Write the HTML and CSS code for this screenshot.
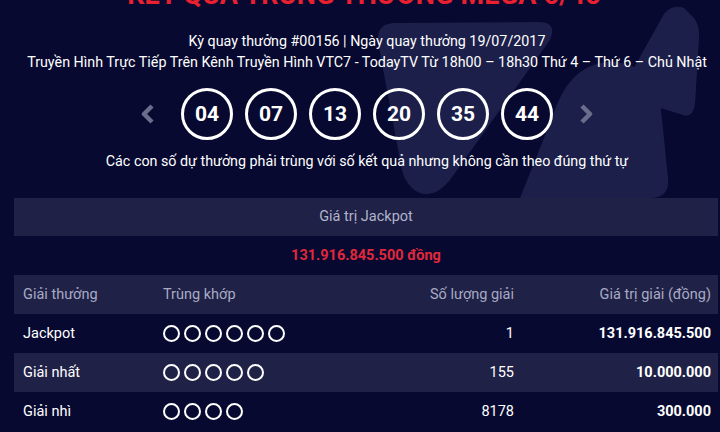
FILE: index.html
```html
<!DOCTYPE html>
<html lang="vi">
<head>
<meta charset="utf-8">
<title>Kết quả Mega 6/45</title>
<link rel="stylesheet" href="styles.css">
</head>
<body>
<div class="page">
  <svg class="deco" width="720" height="200" viewBox="0 0 720 200" aria-hidden="true">
    <path class="shape" d="M378,42 Q376,24 394,23 L538,22 Q558,22 550,40 L450,180 Q432,202 414,190 Q402,180 400,160 Z"/>
    <path class="shape" d="M520,198 L552,118 Q568,66 606,62 Q648,60 660,100 L668,178 Q670,198 650,198 Z"/>
    <path class="shape" d="M628,98 Q620,92 626,82 L664,14 Q672,4 684,8 L694,18 Q700,26 699,38 L695,104 Q693,120 680,114 Z"/>
  </svg>
  <div class="hero">
    <h1 class="title">KẾT QUẢ TRÚNG THƯỞNG MEGA 6/45</h1>
    <p class="meta">Kỳ quay thưởng #00156 | Ngày quay thưởng 19/07/2017</p>
    <p class="meta">Truyền Hình Trực Tiếp Trên Kênh Truyền Hình VTC7 - TodayTV Từ 18h00 – 18h30 Thứ 4 – Thứ 6 – Chủ Nhật</p>
    <div class="balls">
      <svg class="arrow" width="14" height="20" viewBox="0 0 14 20"><path d="M11,2 L3,10 L11,18" fill="none" stroke="#6b6d8c" stroke-width="4.5" stroke-linejoin="round"/></svg>
      <span class="ball">04</span>
      <span class="ball">07</span>
      <span class="ball">13</span>
      <span class="ball">20</span>
      <span class="ball">35</span>
      <span class="ball">44</span>
      <svg class="arrow" width="14" height="20" viewBox="0 0 14 20"><path d="M3,2 L11,10 L3,18" fill="none" stroke="#6b6d8c" stroke-width="4.5" stroke-linejoin="round"/></svg>
    </div>
    <p class="note">Các con số dự thưởng phải trùng với số kết quả nhưng không cần theo đúng thứ tự</p>
  </div>
  <div class="table">
    <div class="jp-head">Giá trị Jackpot</div>
    <div class="jp-value">131.916.845.500 đồng</div>
    <div class="row head">
      <div class="c1">Giải thưởng</div>
      <div class="c2">Trùng khớp</div>
      <div class="c3">Số lượng giải</div>
      <div class="c4">Giá trị giải (đồng)</div>
    </div>
    <div class="row">
      <div class="c1">Jackpot</div>
      <div class="c2 dots"><i></i><i></i><i></i><i></i><i></i><i></i></div>
      <div class="c3">1</div>
      <div class="c4 strong">131.916.845.500</div>
    </div>
    <div class="row alt">
      <div class="c1">Giải nhất</div>
      <div class="c2 dots"><i></i><i></i><i></i><i></i><i></i></div>
      <div class="c3">155</div>
      <div class="c4 strong">10.000.000</div>
    </div>
    <div class="row">
      <div class="c1">Giải nhì</div>
      <div class="c2 dots"><i></i><i></i><i></i><i></i></div>
      <div class="c3">8178</div>
      <div class="c4 strong">300.000</div>
    </div>
  </div>
</div>
</body>
</html>
```
FILE: styles.css
```css
html, body {
  margin: 0;
  padding: 0;
  background: #070930;
  overflow: hidden;
}
body {
  font-family: Roboto, "Liberation Sans", sans-serif;
  color: #ffffff;
  width: 720px;
  height: 432px;
}
.page {
  position: relative;
  width: 720px;
  height: 432px;
  overflow: hidden;
}
.deco {
  position: absolute;
  left: 0;
  top: 0;
  z-index: 0;
}
.shape {
  fill: #1c1f4a;
}
.hero {
  position: relative;
  z-index: 1;
  text-align: center;
  padding-left: 14px;
}
.title {
  margin: -20px 0 0 -6px;
  font-size: 27px;
  line-height: 30px;
  font-weight: 700;
  color: #e8202f;
  letter-spacing: 0.2px;
  white-space: nowrap;
}
.meta {
  margin: 0;
  font-size: 14.3px;
  line-height: 21px;
  white-space: nowrap;
}
.title + .meta {
  margin-top: 21px;
}
.balls {
  display: flex;
  justify-content: center;
  align-items: center;
  gap: 12px;
  margin-top: 15px;
  height: 52px;
}
.arrow {
  margin: 0 14px;
}
.ball {
  width: 46px;
  height: 46px;
  border: 3px solid #ffffff;
  border-radius: 50%;
  display: flex;
  align-items: center;
  justify-content: center;
  font-size: 21px;
  font-weight: 700;
}
.note {
  margin: 11px 0 0;
  font-size: 14.3px;
  line-height: 21px;
  white-space: nowrap;
}
.table {
  position: relative;
  z-index: 1;
  margin: 26px 0 0 14px;
  width: 704px;
  font-size: 14.5px;
}
.jp-head {
  height: 38px;
  line-height: 38px;
  text-align: center;
  background: #1f2147;
  color: #b2b4ca;
}
.jp-value {
  height: 39px;
  line-height: 39px;
  text-align: center;
  color: #e0283c;
  font-weight: 700;
  background: #070930;
}
.row {
  display: grid;
  grid-template-columns: 140px 229px 140px 195px;
  height: 39px;
  align-items: center;
  background: #070930;
}
.row.head, .row.alt {
  background: #1f2147;
}
.row.head {
  color: #a8abc4;
}
.c1, .c2 {
  padding-left: 9px;
}
.c3 {
  text-align: right;
  padding-right: 9px;
}
.c4 {
  text-align: right;
  padding-right: 7px;
}
.strong {
  font-weight: 700;
}
.dots {
  display: flex;
  gap: 4px;
}
.dots i {
  display: block;
  width: 13px;
  height: 13px;
  border: 2.5px solid #ffffff;
  border-radius: 50%;
}
```
